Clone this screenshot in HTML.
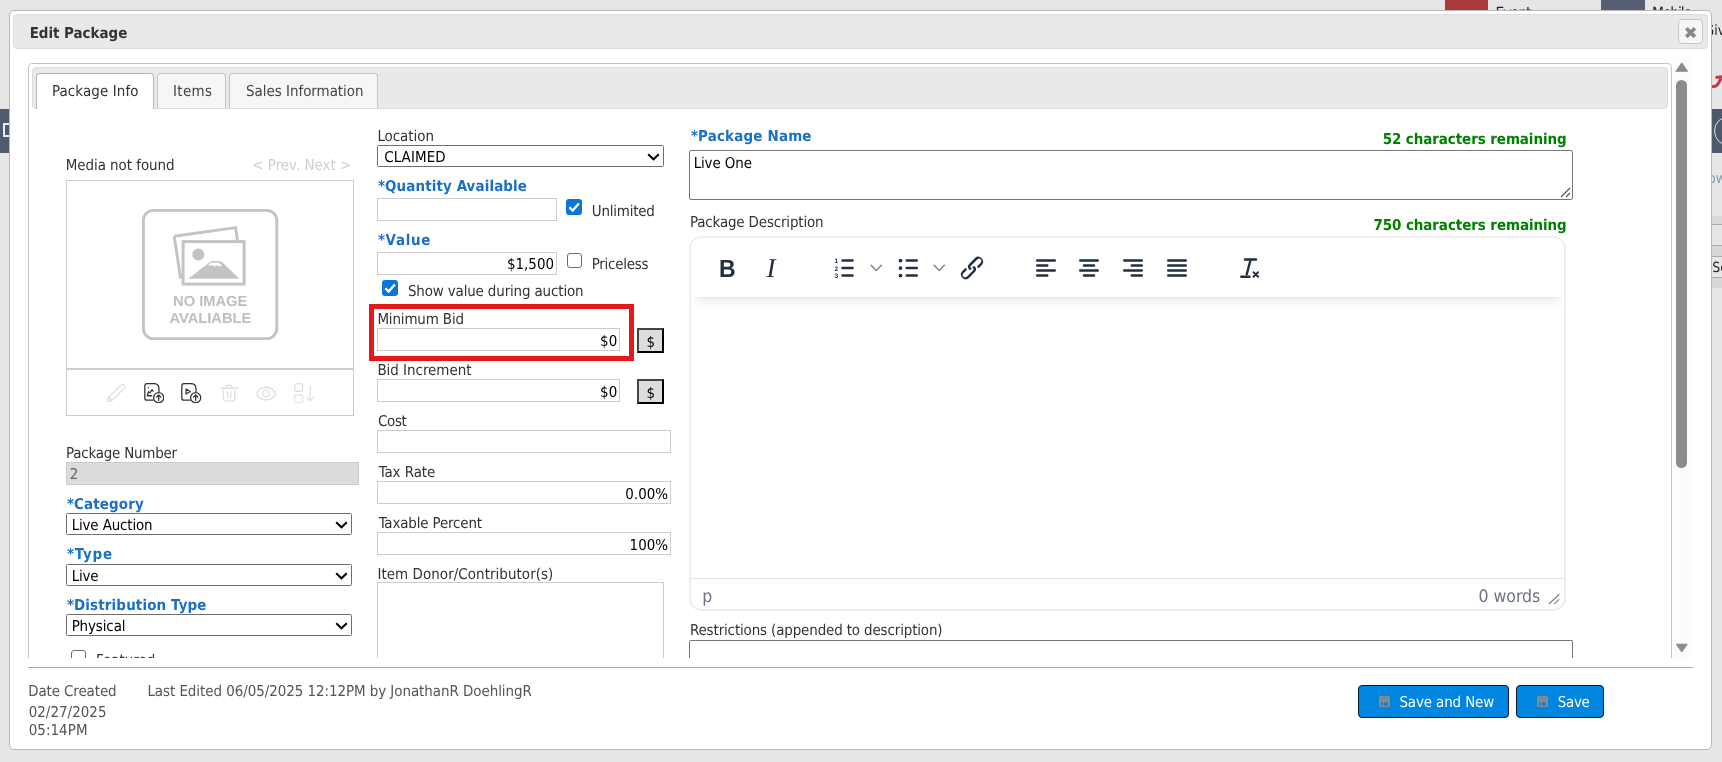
<!DOCTYPE html>
<html lang="en"><head><meta charset="utf-8"><title>Edit Package</title>
<style>
*{box-sizing:border-box}
html,body{margin:0;padding:0}
body{width:1722px;height:762px;overflow:hidden;position:relative;background:#e6e6e6;font-family:"DejaVu Sans Condensed","DejaVu Sans","Liberation Sans",sans-serif;font-size:14.95px;color:#333;font-stretch:condensed;text-rendering:geometricPrecision}
#root{position:absolute;left:0;top:0;width:1722px;height:762px;overflow:hidden;will-change:transform}
.a{position:absolute}
.t{position:absolute;white-space:pre;line-height:20px;font-size:14.95px}
.b{font-weight:bold}
.blue{color:#1a70c5}
.green{color:#008000}
.in{position:absolute;background:#fff;border:1px solid #ccc}
.sel{position:absolute;background:#fff;border:1px solid #6f6f6f;border-radius:1.5px}
.sel svg{position:absolute;right:3.4px;top:6.5px}
.cb{position:absolute;width:16.25px;height:16.25px;border-radius:3px}
.cb.on{background:#0b76d9}
.cb.off{background:#fff;border:1.4px solid #6e6e6e;width:15px;height:15px;margin:.6px 0 0 .6px}
</style></head>
<body>
<div id="root">
<div class="a" style="left:1445px;top:0;width:43px;height:10px;background:#a83a3a"></div>
<div class="a" style="left:1601px;top:0;width:44px;height:10px;background:#566072"></div>
<span class="t" style="left:1495.50px;top:3.00px;font-size:15.5px;color:#222;letter-spacing:-0.988px">Event</span>
<span class="t" style="left:1652.00px;top:3.00px;font-size:15.5px;color:#222;letter-spacing:-1.153px">Mobile</span>
<span class="t" style="left:1704.50px;top:21.00px;font-size:14px;color:#222">Giv</span>
<svg class="a" style="left:1711px;top:74px" width="11" height="16" viewBox="0 0 11 16"><path d="M1 12.300 Q5.200 13.300 7.200 9.500 L11 3 M4.500 3.600 L11 2.800" fill="none" stroke="#c8354a" stroke-width="3"/></svg>
<div class="a" style="left:1712px;top:109px;width:10px;height:44px;background:#4e576b"></div>
<div class="a" style="left:1714px;top:116px;width:30px;height:30px;border:1.5px solid #dfe3ea;border-radius:50%"></div>
<span class="t" style="left:1708.00px;top:169.00px;font-size:14px;color:#8a9ab0">ow</span>
<div class="a" style="left:1712px;top:216px;width:10px;height:9px;background:#dadada;border-bottom:1px solid #aaa"></div>
<div class="a" style="left:1712px;top:245px;width:10px;height:12px;background:#d8d8d8;border-top:1px solid #aaa;border-bottom:1px solid #aaa"></div>
<span class="t" style="left:1712.30px;top:258.00px;font-size:14px;color:#222">Se</span>
<div class="a" style="left:1712px;top:277px;width:10px;height:11px;background:#d8d8d8;border-top:1px solid #aaa"></div>
<div class="a" style="left:0;top:109px;width:9px;height:44px;background:#515a6d"></div>
<div class="a" style="left:3px;top:123px;width:10px;height:14px;border:2px solid #e8eef5;border-right:none"></div>
<div class="a" style="left:9px;top:10px;width:1703px;height:740px;background:#fff;border:1px solid #b8b8b8;border-radius:5px"></div>
<div class="a" style="left:13px;top:14px;width:1695px;height:35px;background:#e9e9e9;border:1px solid #ddd;border-radius:4px"></div>
<span class="t b" style="left:29.64px;top:23.00px;color:#333;letter-spacing:-0.009px">Edit Package</span>
<div class="a" style="left:1678px;top:19px;width:25px;height:25px;background:#f6f6f6;border:1px solid #c5c5c5;border-radius:4px"></div>
<svg class="a" style="left:1684px;top:26px" width="13" height="13" viewBox="0 0 13 13"><path d="M2.300 2.300 L10.900 10.900 M10.900 2.300 L2.300 10.900" fill="none" stroke="#888" stroke-width="3.700"/></svg>
<div class="a" style="left:28px;top:63px;width:1644px;height:594.5px;overflow:hidden">
<div class="a" style="left:0;top:0;width:1644px;height:700px;border:1px solid #c5c5c5;border-radius:4px"></div>
</div>
<div class="a" style="left:32px;top:67px;width:1636px;height:42px;background:#e9e9e9;border:1px solid #ddd;border-radius:4px"></div>
<div class="a" style="left:36px;top:73px;width:118px;height:36px;background:#fff;border:1px solid #b5b5b5;border-bottom:none;border-radius:4px 4px 0 0"></div>
<div class="a" style="left:157px;top:73px;width:69px;height:35px;background:#f6f6f6;border:1px solid #c5c5c5;border-bottom:none;border-radius:4px 4px 0 0"></div>
<div class="a" style="left:229px;top:73px;width:149px;height:35px;background:#f6f6f6;border:1px solid #c5c5c5;border-bottom:none;border-radius:4px 4px 0 0"></div>
<span class="t" style="left:51.96px;top:81.00px;letter-spacing:0.120px">Package Info</span>
<span class="t" style="left:173.00px;top:81.00px;color:#454545;letter-spacing:0.330px">Items</span>
<span class="t" style="left:246.05px;top:81.00px;color:#454545;letter-spacing:-0.018px">Sales Information</span>
<div class="a" style="left:1672.5px;top:57px;width:18.5px;height:600.5px;background:#fcfcfc"></div>
<svg class="a" style="left:1674.8px;top:62px" width="13.5" height="10.500" viewBox="0 0 13 10"><path d="M6.5 1 L12 8.8 H1 Z" fill="#8b8b8b" stroke="#8b8b8b" stroke-width="1" stroke-linejoin="round"/></svg>
<div class="a" style="left:1676px;top:80px;width:11px;height:388px;background:#8b8b8b;border-radius:5.5px"></div>
<svg class="a" style="left:1674.8px;top:643px" width="13.5" height="10" viewBox="0 0 13 10"><path d="M6.5 9 L12 1.2 H1 Z" fill="#8b8b8b" stroke="#8b8b8b" stroke-width="1" stroke-linejoin="round"/></svg>
<span class="t" style="left:65.71px;top:155.00px;letter-spacing:-0.037px">Media not found</span>
<span class="t" style="left:252.29px;top:155.00px;color:#cfcfcf">&lt; Prev. Next &gt;</span>
<div class="a" style="left:66px;top:180px;width:288px;height:236px;border:1px solid #ccc"></div>
<div class="a" style="left:66px;top:368px;width:288px;height:2px;background:#ccc"></div>
<svg class="a" style="left:140px;top:207px" width="140" height="135" viewBox="0 0 140 135"><rect x="3.4" y="3.4" width="133.4" height="128.2" rx="10" fill="#fff" stroke="#c4c4c4" stroke-width="2.9"/><path d="M34.2 29.2 L95.6 20.6 L97.6 34 M34.2 29.2 L40.6 71.5" fill="none" stroke="#c4c4c4" stroke-width="3"/><rect x="43.1" y="34.6" width="61" height="42.5" fill="#fff" stroke="#c4c4c4" stroke-width="3"/><circle cx="58.3" cy="47.5" r="6" fill="#c4c4c4"/><path d="M48.2 71.7 L69.5 55.5 Q71 54 73 54 L79 54 Q81 54 82.5 55.5 L99.3 71.7 Z" fill="#c4c4c4"/><path d="M68 58.6 L70.5 56 L78 55.6 L82.4 58.4 L79.5 59.4 L77 58.2 L74.6 59.6 L72 58.2 Z" fill="#fff"/><text x="70.2" y="99.1" text-anchor="middle" font-family="&quot;Liberation Sans&quot;,sans-serif" font-weight="bold" font-size="14.7" fill="#bfbfbf">NO IMAGE</text><text x="70.4" y="115.8" text-anchor="middle" font-family="&quot;Liberation Sans&quot;,sans-serif" font-weight="bold" font-size="14.7" fill="#bfbfbf">AVALIABLE</text></svg>
<svg class="a" style="left:106.25px;top:383px" width="20.25" height="20.25" viewBox="0 0 20 20" fill="none" stroke="#dcdcdc" stroke-width="1.15" stroke-linecap="round" stroke-linejoin="round"><path d="M1.3 18.7 L2.6 14.2 L14.6 2.2 Q16.2 .8 17.9 2.3 Q19.3 3.9 17.8 5.5 L5.8 17.4 Z M2.9 14 L6 17.1"/></svg><svg class="a" style="left:143.75px;top:383px" width="20.25" height="20.25" viewBox="0 0 20 20" fill="none" stroke="#333" stroke-width="1.25" stroke-linecap="round" stroke-linejoin="round"><path d="M9 17 H3 Q.8 17 .8 14.8 V2.8 Q.8 .6 3 .6 H10 Q14.6 .8 14.8 5.5 V8.6"/><circle cx="4.3" cy="4.6" r=".6" fill="#333" stroke="none"/><path d="M3.2 12.6 L4.4 8.6 L6 9.6 L8 6.6 L9 8 M3.2 12.6 H7.6"/><circle cx="14.5" cy="14.5" r="5" fill="#fff"/><path d="M14.5 17.3 V11.9 M12.3 14 L14.5 11.8 L16.7 14"/></svg><svg class="a" style="left:181.25px;top:383px" width="20.25" height="20.25" viewBox="0 0 20 20" fill="none" stroke="#333" stroke-width="1.25" stroke-linecap="round" stroke-linejoin="round"><path d="M9 17 H3 Q.8 17 .8 14.8 V2.8 Q.8 .6 3 .6 H10 Q14.6 .8 14.8 5.5 V8.6"/><path d="M5 6 V10.8 L9.1 8.4 Z"/><circle cx="14.5" cy="14.5" r="5" fill="#fff"/><path d="M14.5 17.3 V11.9 M12.3 14 L14.5 11.8 L16.7 14"/></svg><svg class="a" style="left:219px;top:383px" width="20.25" height="20.25" viewBox="0 0 20 20" fill="none" stroke="#dcdcdc" stroke-width="1.15" stroke-linecap="round" stroke-linejoin="round"><path d="M1.6 5 H18.4 M7.3 5 V3.4 Q7.3 2.3 8.4 2.3 H11.6 Q12.7 2.3 12.7 3.4 V5 M3.9 5.2 L4.6 16.6 Q4.7 17.8 5.9 17.8 H14.1 Q15.3 17.8 15.4 16.6 L16.1 5.2 M8.4 8.4 V14.4 M11.6 8.4 V14.4"/></svg><svg class="a" style="left:256.25px;top:383px" width="20.25" height="20.25" viewBox="0 0 20 20" fill="none" stroke="#dcdcdc" stroke-width="1.15" stroke-linecap="round" stroke-linejoin="round"><path d="M.8 10.8 Q1.5 7.6 4.4 5.6 Q7 4 10 4 Q13 4 15.6 5.6 Q18.5 7.6 19.2 10.8 Q17 16.6 10 16.6 Q3 16.6 .8 10.8 Z" /><circle cx="10" cy="10.3" r="3.4"/></svg><svg class="a" style="left:293.75px;top:383px" width="20.25" height="20.25" viewBox="0 0 20 20" fill="none" stroke="#dcdcdc" stroke-width="1.15" stroke-linecap="round" stroke-linejoin="round"><rect x=".7" y=".7" width="7.8" height="7.6" rx="1.2"/><rect x=".7" y="11.7" width="7.8" height="7.6" rx="1.2" stroke-dasharray="2 1.6"/><path d="M16 3.2 V17.6 M12.6 14.2 L16 17.7 L19.4 14.2"/></svg>
<span class="t" style="left:65.96px;top:443.00px;letter-spacing:-0.210px">Package Number</span>
<div class="a" style="left:66px;top:462px;width:293px;height:23px;background:#dcdcdc;border:1px solid #ccc"></div>
<span class="t" style="left:69.82px;top:464.00px;color:#666">2</span>
<span class="t b blue" style="left:66.88px;top:494.00px;letter-spacing:0.144px">*Category</span>
<div class="sel" style="left:66px;top:513px;width:286px;height:22px"><svg width="13" height="8" viewBox="0 0 13 8"><path d="M1.2 1.2 L6.5 6.3 L11.8 1.2" fill="none" stroke="#000" stroke-width="2"/></svg></div>
<span class="t" style="left:71.63px;top:515.00px;color:#000;letter-spacing:-0.141px">Live Auction</span>
<span class="t b blue" style="left:66.88px;top:544.00px;letter-spacing:0.837px">*Type</span>
<div class="sel" style="left:66px;top:564px;width:286px;height:22px"><svg width="13" height="8" viewBox="0 0 13 8"><path d="M1.2 1.2 L6.5 6.3 L11.8 1.2" fill="none" stroke="#000" stroke-width="2"/></svg></div>
<span class="t" style="left:71.63px;top:566.00px;color:#000;letter-spacing:-0.158px">Live</span>
<span class="t b blue" style="left:66.88px;top:595.00px;letter-spacing:0.150px">*Distribution Type</span>
<div class="sel" style="left:66px;top:614px;width:286px;height:22px"><svg width="13" height="8" viewBox="0 0 13 8"><path d="M1.2 1.2 L6.5 6.3 L11.8 1.2" fill="none" stroke="#000" stroke-width="2"/></svg></div>
<span class="t" style="left:71.63px;top:616.00px;color:#000;letter-spacing:-0.116px">Physical</span>
<div class="a" style="left:60px;top:640px;width:200px;height:17.5px;overflow:hidden">
<div class="cb off" style="left:10.75px;top:9.25px"></div>
<span class="t" style="left:36px;top:10px">Featured</span>
</div>
<span class="t" style="left:377.41px;top:126.00px;letter-spacing:-0.038px">Location</span>
<div class="sel" style="left:377px;top:145px;width:287px;height:22px"><svg width="13" height="8" viewBox="0 0 13 8"><path d="M1.2 1.2 L6.5 6.3 L11.8 1.2" fill="none" stroke="#000" stroke-width="2"/></svg></div>
<span class="t" style="left:384.17px;top:147.00px;color:#000;letter-spacing:0.121px">CLAIMED</span>
<span class="t b blue" style="left:377.88px;top:176.00px;letter-spacing:0.122px">*Quantity Available</span>
<div class="in" style="left:377px;top:198px;width:180px;height:23px;"></div>
<div class="cb on" style="left:566px;top:199px"><svg class="a" style="left:0;top:0" width="16.25" height="16.25" viewBox="0 0 13 13"><path d="M2.7 6.6 L5.3 9.2 L10.3 3.6" fill="none" stroke="#fff" stroke-width="1.9"/></svg></div>
<span class="t" style="left:591.82px;top:201.00px;letter-spacing:-0.216px">Unlimited</span>
<span class="t b blue" style="left:377.88px;top:230.00px;letter-spacing:0.726px">*Value</span>
<div class="in" style="left:377px;top:252px;width:180px;height:23px;"></div>
<span class="t" style="right:1168.03px;top:254.00px;color:#000">$1,500</span>
<div class="cb off" style="left:566px;top:252px"></div>
<span class="t" style="left:591.71px;top:254.00px;letter-spacing:-0.240px">Priceless</span>
<div class="cb on" style="left:382px;top:280px"><svg class="a" style="left:0;top:0" width="16.25" height="16.25" viewBox="0 0 13 13"><path d="M2.7 6.6 L5.3 9.2 L10.3 3.6" fill="none" stroke="#fff" stroke-width="1.9"/></svg></div>
<span class="t" style="left:407.90px;top:281.00px;letter-spacing:-0.139px">Show value during auction</span>
<div class="a" style="left:369px;top:304px;width:265px;height:57px;border:5px solid #e4191c"></div>
<span class="t" style="left:377.41px;top:309.00px;letter-spacing:-0.144px">Minimum Bid</span>
<div class="in" style="left:377px;top:328px;width:243px;height:23px;"></div>
<span class="t" style="right:1104.81px;top:331.00px;color:#000">$0</span>
<div class="a" style="left:637px;top:328px;width:27px;height:25px;background:#ddd;border-style:solid;border-width:2px 2.5px 2.5px 2px;border-color:#444 #000 #000 #444"></div><span class="t" style="left:646.50px;top:332.00px;color:#000">$</span>
<span class="t" style="left:377.41px;top:360.00px;letter-spacing:-0.014px">Bid Increment</span>
<div class="in" style="left:377px;top:379px;width:243px;height:23px;"></div>
<span class="t" style="right:1104.81px;top:382.00px;color:#000">$0</span>
<div class="a" style="left:637px;top:379px;width:27px;height:25px;background:#ddd;border-style:solid;border-width:2px 2.5px 2.5px 2px;border-color:#444 #000 #000 #444"></div><span class="t" style="left:646.50px;top:383.00px;color:#000">$</span>
<span class="t" style="left:378.01px;top:411.00px;letter-spacing:-0.349px">Cost</span>
<div class="in" style="left:377px;top:430px;width:294px;height:23px;"></div>
<span class="t" style="left:378.71px;top:462.00px;letter-spacing:-0.050px">Tax Rate</span>
<div class="in" style="left:377px;top:481px;width:294px;height:23px;"></div>
<span class="t" style="right:1054.00px;top:484.00px;color:#000">0.00%</span>
<span class="t" style="left:378.71px;top:513.00px;letter-spacing:-0.146px">Taxable Percent</span>
<div class="in" style="left:377px;top:532px;width:294px;height:23px;"></div>
<span class="t" style="right:1054.00px;top:535.00px;color:#000">100%</span>
<span class="t" style="left:377.41px;top:564.00px;letter-spacing:0.063px">Item Donor/Contributor(s)</span>
<div class="a" style="left:377px;top:582px;width:287px;height:75.5px;border:1px solid #ccc;border-bottom:none"></div>
<span class="t b blue" style="left:690.88px;top:126.00px;letter-spacing:0.187px">*Package Name</span>
<span class="t b green" style="left:1382.63px;top:129.00px;letter-spacing:-0.059px">52 characters remaining</span>
<div class="a" style="left:689px;top:150px;width:884px;height:50px;border:1px solid #767676;border-radius:2px;background:#fff"></div>
<svg class="a" style="left:1560px;top:187px" width="11" height="11" viewBox="0 0 11 11"><path d="M1 10 L10 1 M6 10 L10 6" stroke="#555" stroke-width="1.2" fill="none"/></svg>
<span class="t" style="left:693.63px;top:153.00px;color:#000;letter-spacing:-0.111px">Live One</span>
<span class="t" style="left:689.96px;top:212.00px;letter-spacing:-0.157px">Package Description</span>
<span class="t b green" style="left:1373.43px;top:215.00px;letter-spacing:-0.063px">750 characters remaining</span>
<div class="a" style="left:689px;top:236px;width:877px;height:375px;border:2px solid #eee;border-radius:12.5px;background:#fff;overflow:hidden"><div class="a" style="left:0;top:0;width:873px;height:58.5px;background:#fff;box-shadow:0 2px 2px -2px rgba(34,47,62,.12),0 10px 10px -5px rgba(34,47,62,.09)"></div><div class="a" style="left:0;top:340px;width:873px;height:1px;background:#e3e3e3"></div></div>
<span class="t" style="left:718.7px;top:254.6px;font:bold 24.8px/30px &quot;Liberation Sans&quot;,sans-serif;transform:scaleX(.93);transform-origin:0 0;color:#222f3e">B</span><span class="t" style="left:766.5px;top:252.5px;font:italic 27px/30px &quot;Liberation Serif&quot;,serif;color:#222f3e">I</span><svg class="a" style="left:830.1px;top:253px" width="30" height="30" viewBox="0 0 24 24" fill="none" stroke="#222f3e" stroke-width="2" stroke-linecap="round"><path d="M10 6 H18 M10 12 H18 M10 18 H18"/><text x="3.6" y="8" font-family="&quot;Liberation Sans&quot;,sans-serif" font-weight="bold" font-size="5.2" fill="#222f3e" stroke="none">1</text><text x="3.6" y="14" font-family="&quot;Liberation Sans&quot;,sans-serif" font-weight="bold" font-size="5.2" fill="#222f3e" stroke="none">2</text><text x="3.6" y="20" font-family="&quot;Liberation Sans&quot;,sans-serif" font-weight="bold" font-size="5.2" fill="#222f3e" stroke="none">3</text></svg><svg class="a" style="left:870px;top:262.2px" width="12.5" height="12.5" viewBox="0 0 10 10"><path d="M1 2.7 L5 6.8 L9 2.7" fill="none" stroke="#8a929b" stroke-width="1.35" stroke-linecap="round" stroke-linejoin="round"/></svg><svg class="a" style="left:893.1px;top:253px" width="30" height="30" viewBox="0 0 24 24" fill="none" stroke="#222f3e" stroke-width="2" stroke-linecap="round"><path d="M11 6 H19 M11 12 H19 M11 18 H19"/><circle cx="6" cy="6" r="1.5" fill="#222f3e" stroke="none"/><circle cx="6" cy="12" r="1.5" fill="#222f3e" stroke="none"/><circle cx="6" cy="18" r="1.5" fill="#222f3e" stroke="none"/></svg><svg class="a" style="left:933px;top:262.2px" width="12.5" height="12.5" viewBox="0 0 10 10"><path d="M1 2.7 L5 6.8 L9 2.7" fill="none" stroke="#8a929b" stroke-width="1.35" stroke-linecap="round" stroke-linejoin="round"/></svg><svg class="a" style="left:957.2px;top:253px" width="30" height="30" viewBox="0 0 24 24"><path d="M6.2 12.3a1 1 0 0 1 1.400 1.400l-2 2a2 2 0 1 0 2.600 2.800l4.800-4.800a1 1 0 0 0 0-1.400 1 1 0 1 1 1.400-1.300 2.900 2.900 0 0 1 0 4L9.600 20a3.900 3.900 0 0 1-5.500-5.500l2-2Zm11.600-.6a1 1 0 0 1-1.400-1.400l2-2a2 2 0 1 0-2.600-2.800L11 10.300a1 1 0 0 0 0 1.400A1 1 0 1 1 9.600 13a2.900 2.900 0 0 1 0-4L14.400 4a3.900 3.900 0 0 1 5.500 5.500l-2 2Z" fill="#222f3e" fill-rule="evenodd"/></svg><svg class="a" style="left:1031.25px;top:253px" width="30" height="30" viewBox="0 0 24 24" fill="none" stroke="#222f3e" stroke-width="2" stroke-linecap="round"><path d="M5 6 H19 M5 10 H13 M5 14 H19 M5 18 H13"/></svg><svg class="a" style="left:1073.8px;top:253px" width="30" height="30" viewBox="0 0 24 24" fill="none" stroke="#222f3e" stroke-width="2" stroke-linecap="round"><path d="M5 6 H19 M8 10 H16 M5 14 H19 M8 18 H16"/></svg><svg class="a" style="left:1118.1px;top:253px" width="30" height="30" viewBox="0 0 24 24" fill="none" stroke="#222f3e" stroke-width="2" stroke-linecap="round"><path d="M5 6 H19 M11 10 H19 M5 14 H19 M11 18 H19"/></svg><svg class="a" style="left:1162.2px;top:253px" width="30" height="30" viewBox="0 0 24 24" fill="none" stroke="#222f3e" stroke-width="2" stroke-linecap="round"><path d="M5 6 H19 M5 10 H19 M5 14 H19 M5 18 H19"/></svg><svg class="a" style="left:1235.3px;top:253px" width="30" height="30" viewBox="0 0 24 24" fill="none" stroke="#222f3e" stroke-width="2" stroke-linecap="round"><path d="M7.9 5.2 H16.8 M12.4 5.6 L9.4 17" stroke-width="1.9"/><path d="M5 19 H11.6" stroke-width="1.9"/><path d="M14.8 15.4 L18.5 19 M18.5 15.4 L14.8 19" stroke-width="1.5"/></svg>
<span class="t" style="left:702.24px;top:587.00px;font-size:17.5px;color:#6b7480">p</span>
<span class="t" style="left:1478.47px;top:587.00px;font-size:17.5px;color:#6b7480;letter-spacing:-0.013px">0 words</span>
<svg class="a" style="left:1548px;top:593px" width="12" height="12" viewBox="0 0 12 12"><path d="M1.200 10.700 L11 1.500 M6.500 10.600 L11 6.600" stroke="#7a828c" stroke-width="1.2" stroke-linecap="round" fill="none"/></svg>
<span class="t" style="left:689.96px;top:620.00px;letter-spacing:-0.132px">Restrictions (appended to description)</span>
<div class="a" style="left:689px;top:640px;width:884px;height:17.5px;border:1px solid #767676;border-bottom:none;border-radius:2px 2px 0 0;background:#fff"></div>
<div class="a" style="left:28px;top:667px;width:1665px;height:1px;background:#aaa"></div>
<span class="t" style="left:28.26px;top:681.00px;color:#555;letter-spacing:-0.109px">Date Created</span>
<span class="t" style="left:28.68px;top:702.00px;color:#555;letter-spacing:0.037px">02/27/2025</span>
<span class="t" style="left:28.68px;top:720.00px;color:#555;letter-spacing:0.064px">05:14PM</span>
<span class="t" style="left:147.42px;top:681.00px;color:#555;letter-spacing:-0.046px">Last Edited 06/05/2025 12:12PM by JonathanR DoehlingR</span>
<div class="a" style="left:1358px;top:685px;width:151px;height:33px;background:#0085e0;border:1px solid #0a1a2a;border-radius:4px"></div><svg class="a" style="left:1379.3px;top:696px" width="11" height="11" viewBox="0 0 11 11"><path d="M1.6 0 H9.4 Q11 0 11 1.6 V9.4 Q11 11 9.400 11 H1.6 Q0 11 0 9.400 V1.6 Q0 0 1.6 0 Z M1.900 6.200 V9.800 H3.600 V6.200 Z M4.900 6.200 V9.800 H8.700 V6.200 Z" fill="#8a8a8a" fill-rule="evenodd"/><rect x="2.4" y="1.300" width="6.200" height="1" fill="#0085e0" opacity=".55"/></svg><span class="t" style="left:1399.44px;top:692.00px;color:#fff;letter-spacing:-0.124px">Save and New</span>
<div class="a" style="left:1516px;top:685px;width:88px;height:33px;background:#0085e0;border:1px solid #0a1a2a;border-radius:4px"></div><svg class="a" style="left:1537.3px;top:696px" width="11" height="11" viewBox="0 0 11 11"><path d="M1.6 0 H9.4 Q11 0 11 1.6 V9.4 Q11 11 9.400 11 H1.6 Q0 11 0 9.400 V1.6 Q0 0 1.6 0 Z M1.900 6.200 V9.800 H3.600 V6.200 Z M4.900 6.200 V9.800 H8.700 V6.200 Z" fill="#8a8a8a" fill-rule="evenodd"/><rect x="2.4" y="1.300" width="6.200" height="1" fill="#0085e0" opacity=".55"/></svg><span class="t" style="left:1557.76px;top:692.00px;color:#fff;letter-spacing:-0.285px">Save</span>
</div>
</body></html>
